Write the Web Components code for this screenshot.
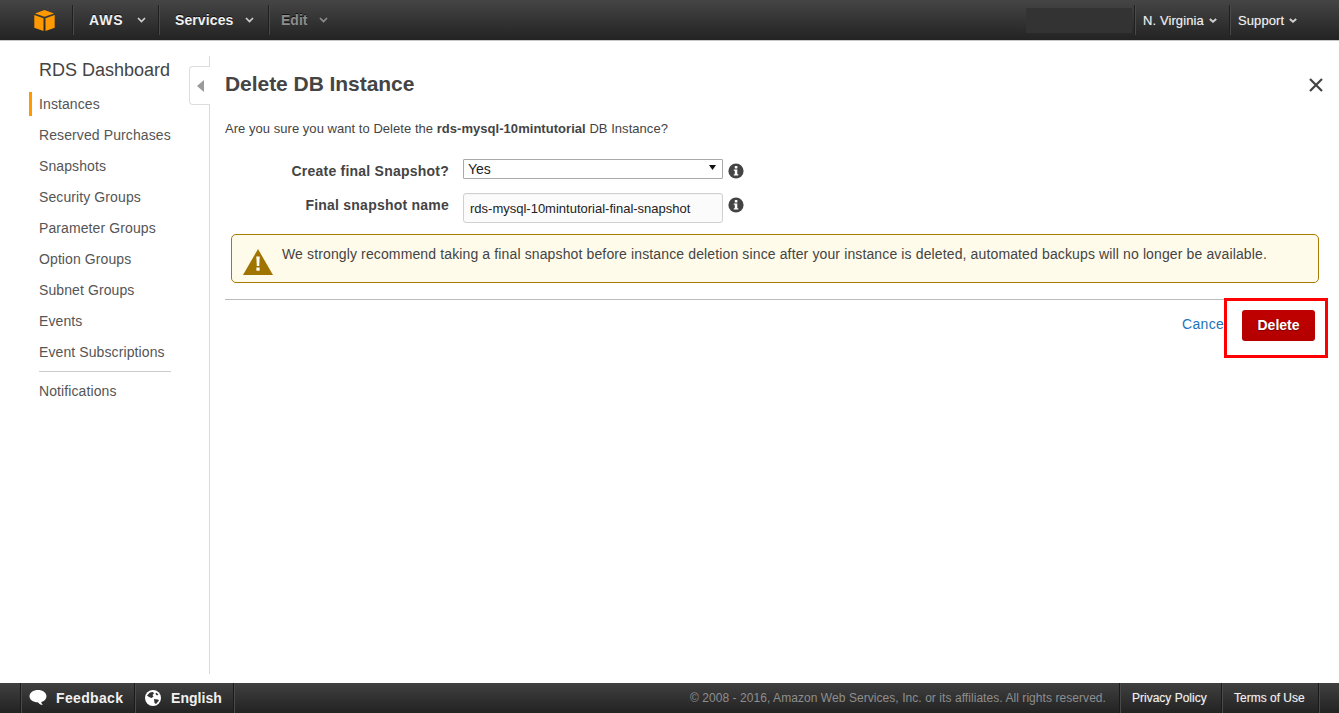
<!DOCTYPE html>
<html><head><meta charset="utf-8"><title>Delete DB Instance</title>
<style>
html,body{margin:0;height:100%;overflow:hidden;background:#fff;font-family:"Liberation Sans",Arial,sans-serif;}
body{display:flex;flex-direction:column;height:713px;}
</style></head><body>
<aws-topbar></aws-topbar>
<div style="flex:1;display:flex;min-height:0;position:relative">
<rds-sidebar></rds-sidebar>
<delete-panel style="flex:1;min-width:0"></delete-panel>
</div>
<aws-footer></aws-footer>
<script>
function def(name, html){
  customElements.define(name, class extends HTMLElement{
    constructor(){super();const r=this.attachShadow({mode:'open'});r.innerHTML=html;}
  });
}
const chev='<svg width="9" height="6" viewBox="0 0 9 6"><path d="M1 1l3.5 3.5L8 1" fill="none" stroke="currentColor" stroke-width="1.7"/></svg>';
const caret='<svg width="8" height="5" viewBox="0 0 8 5"><path d="M.8 .9L4 3.700 7.200 .9" fill="none" stroke="currentColor" stroke-width="2"/></svg>';
def('aws-topbar',`<style>
:host{display:flex;align-items:center;height:40px;flex:none;background:linear-gradient(#454545,#232323);border-bottom:1px solid #c8c8c8;box-sizing:content-box;color:#eee;font-size:14px;font-weight:bold;position:relative}
.logo{width:72px;display:flex;justify-content:flex-end;padding-right:17px;box-sizing:border-box}
.sep{width:1px;height:30px;background:#1f1f1f;border-right:1px solid #4a4a4a;flex:none}
.item{display:flex;align-items:center;height:40px;color:#f0f0f0;text-shadow:0 -1px 0 #111;box-sizing:border-box;white-space:nowrap}
.item svg{color:#cfcfcf}
.aws{width:84px;padding-left:15px;gap:13px;letter-spacing:.9px}
.svc{width:108px;padding-left:15px;gap:12px;letter-spacing:.1px}
.edit{padding-left:11px;gap:12px;color:#8d8d8d}.edit svg{color:#8d8d8d}
.sp{flex:1}
.acct{width:106px;height:25px;background:#333;margin-right:2px}
.sm{font-size:13px;font-weight:normal;gap:5px;padding-left:7px;letter-spacing:.1px;text-shadow:0 0 1px rgba(255,255,255,.35)}
</style>
<div class="logo"><svg width="21" height="21" viewBox="0 0 21 21"><path d="M10.500 0l9.500 3.400-9.500 3.400L1 3.400z" fill="#f90"/><path d="M.3 5l9.200 3.300V21L.3 17.800z" fill="#f90"/><path d="M20.700 5l-9.200 3.300V21l9.200-3.200z" fill="#f90"/></svg></div>
<span class="sep"></span><div class="item aws">AWS ${chev}</div><span class="sep"></span>
<div class="item svc">Services ${chev}</div><span class="sep"></span>
<div class="item edit">Edit ${chev}</div><span class="sp"></span>
<div class="acct"></div><span class="sep"></span>
<div class="item sm" style="width:93px">N. Virginia ${caret}</div><span class="sep"></span>
<div class="item sm" style="width:108px">Support ${caret}</div>
`);
def('side-link',`<style>
:host{display:block;height:31px;line-height:27px;padding-left:10px;font-size:14px;letter-spacing:.1px;color:#555;box-sizing:border-box;white-space:nowrap}
:host([active]){position:relative}
:host([active])::before{content:"";position:absolute;left:0;top:1px;width:3px;height:24px;background:#f90}
</style><slot></slot>`);
def('rds-sidebar',`<style>
:host{display:block;width:210px;flex:none;box-sizing:border-box;position:relative;padding:16px 0 0 29px}
.line{position:absolute;right:0;top:15px;bottom:9px;width:1px;background:#d9d9d9}
h2{margin:0 0 7px 10px;font-size:18px;font-weight:normal;color:#444;line-height:27px;white-space:nowrap}
hr{border:0;border-top:1px solid #ccc;margin:1px 0 6px 10px;width:132px}
.tab{position:absolute;left:189px;top:25px;width:21px;height:39px;background:#fff;border:1px solid #ddd;border-right:0;border-radius:4px 0 0 4px;box-sizing:border-box;display:flex;align-items:center;justify-content:center;z-index:1}
</style>
<div class="line"></div>
<div class="tab"><svg width="7" height="12" viewBox="0 0 7 12"><path d="M7 0v12L0 6z" fill="#9a9a9a"/></svg></div>
<h2>RDS Dashboard</h2>
<side-link active>Instances</side-link>
<side-link>Reserved Purchases</side-link>
<side-link>Snapshots</side-link>
<side-link>Security Groups</side-link>
<side-link>Parameter Groups</side-link>
<side-link>Option Groups</side-link>
<side-link>Subnet Groups</side-link>
<side-link>Events</side-link>
<side-link>Event Subscriptions</side-link>
<hr>
<side-link>Notifications</side-link>
`);
const info='<svg width="16" height="16" viewBox="0 0 16 16"><circle cx="8" cy="8" r="7.600" fill="#444"/><rect x="6.800" y="3" width="2.600" height="2.400" rx=".5" fill="#fff"/><path d="M5.800 6.500h3.500v4.800h1v1.300H5.800v-1.300h1V7.800h-1z" fill="#fff"/></svg>';
def('form-row',`<style>
:host{display:flex;align-items:flex-start;color:#444}
label{width:224px;flex:none;text-align:right;font-size:14px;font-weight:bold;letter-spacing:.23px;color:#444;white-space:nowrap;padding-top:4px}
.ctl{width:260px;flex:none;margin-left:14px}
.i{margin-left:5px;display:flex;padding-top:4px}
</style><label part="l"><slot name="label"></slot></label><div class="ctl"><slot></slot></div><div class="i">${info}</div>`);
def('select-box',`<style>
:host{display:flex;align-items:center;justify-content:space-between;height:20px;box-sizing:border-box;border:1px solid #a9a9a9;background:#fff;border-radius:1px;padding:0 6px 0 4px;font-size:14px;color:#222}
svg{margin-bottom:3px}
</style><span><slot></slot></span><svg width="7" height="5" viewBox="0 0 7 5"><path d="M0 0h7L3.500 5z" fill="#111"/></svg>`);
def('text-box',`<style>
:host{display:flex;align-items:center;height:30px;box-sizing:border-box;border:1px solid #d0d0d0;background:#fbfbfb;border-radius:3px;padding:0 0 0 6px;font-size:13px;color:#222;white-space:nowrap;box-shadow:inset 0 1px 1px rgba(0,0,0,.03)}
</style><slot></slot>`);
def('warn-box',`<style>
:host{display:flex;align-items:flex-start;height:49px;box-sizing:border-box;border:1px solid #a87b00;border-radius:5px;background:#fffbea;font-size:14px;letter-spacing:.13px;color:#444;padding:11px 0 0 50px;position:relative;white-space:nowrap}
svg{position:absolute;left:11px;top:14px}
</style><svg width="30" height="26" viewBox="0 0 30 26"><path d="M15 0L30 26H0z" fill="#a07400"/><path d="M13.300 7.500h3.400l-.5 9.500h-2.400z" fill="#fff"/><rect x="13.400" y="18.500" width="3.200" height="3.200" fill="#fff"/></svg><slot></slot>`);
def('delete-panel',`<style>
:host{display:block;position:relative;padding:0 15px;box-sizing:border-box}
.head{display:flex;justify-content:space-between;align-items:flex-start;height:81px;box-sizing:border-box;padding-top:31px}
h1{margin:0;font-size:21px;color:#444;font-weight:bold;line-height:24px;letter-spacing:-.05px;white-space:nowrap}
.close{display:flex;margin-top:6px;margin-right:1px}
p{margin:0;font-size:13px;letter-spacing:.04px;color:#444;line-height:14px;height:37px;white-space:nowrap}
form-row:nth-of-type(2){margin-top:14px}
warn-box{margin:11px 5px 0 6px}
.rule{border-top:1px solid #bbb;margin-top:16px}
.act{display:flex;justify-content:flex-end;align-items:flex-start;padding-top:10px;gap:19px;padding-right:9px}
a{color:#2474b9;font-size:14px;letter-spacing:.35px;width:41px;white-space:nowrap;line-height:28px}
button{all:unset;width:73px;height:31px;box-sizing:border-box;background:linear-gradient(#c00000,#b40000);border-radius:3px;text-align:center;font:bold 14px/29px "Liberation Sans",Arial,sans-serif;color:#fff;text-shadow:0 1px 1px #700}
.mark{position:absolute;left:1014px;top:257px;width:104px;height:60px;box-sizing:border-box;border:3px solid #f00}
</style>
<div class="head"><h1>Delete DB Instance</h1><span class="close"><svg width="14" height="14" viewBox="0 0 14 14"><path d="M1 1l12 12M13 1L1 13" stroke="#444" stroke-width="2.200"/></svg></span></div>
<p>Are you sure you want to Delete the <b>rds-mysql-10mintutorial</b> DB Instance?</p>
<form-row><span slot="label">Create final Snapshot?</span><select-box>Yes</select-box></form-row>
<form-row><span slot="label">Final snapshot name</span><text-box>rds-mysql-10mintutorial-final-snapshot</text-box></form-row>
<warn-box>We strongly recommend taking a final snapshot before instance deletion since after your instance is deleted, automated backups will no longer be available.</warn-box>
<div class="rule"></div>
<div class="act"><a>Cancel</a><button>Delete</button></div>
<div class="mark"></div>
`);
def('aws-footer',`<style>
:host{display:flex;align-items:center;height:30px;flex:none;background:linear-gradient(#404040,#222);color:#f0f0f0;font-size:14px;font-weight:bold;position:relative}
.sep{width:1px;height:30px;background:#1a1a1a;border-right:1px solid #4a4a4a;flex:none}
.it{display:flex;align-items:center;height:30px;box-sizing:border-box;white-space:nowrap}
.sp{flex:1}
.copy{font-size:12px;font-weight:normal;letter-spacing:.06px;color:#8e8e8e;padding-right:13px}
.s{font-size:12px;font-weight:normal;color:#f0f0f0;text-shadow:0 0 1px rgba(255,255,255,.35);padding-left:11px}
</style>
<div style="width:20px"></div><span class="sep"></span>
<div class="it" style="width:112px;padding-left:7px;gap:9px;letter-spacing:.35px"><svg width="18" height="16" viewBox="0 0 19 17"><path d="M9.500 0c5 0 9 2.900 9 6.600 0 3-2.400 5.300-5.600 6.200.3 1.400.9 2.400 1.700 3.200-2.200-.2-4-1.400-5.300-3C4.100 13 .5 10.200.5 6.600.5 2.900 4.500 0 9.500 0z" fill="#fff"/></svg>Feedback</div><span class="sep"></span>
<div class="it" style="width:97px;padding-left:9px;gap:10px;letter-spacing:.05px"><svg width="16" height="16" viewBox="0 0 16 16"><circle cx="8" cy="8" r="8" fill="#fff"/><path d="M2 5.500l3-3 3-.5 1 1.500-1.500 1.500 1 1.500L6.500 8 4 7zM9 9l4 .5 1 1-3 3.500-1.500-1zM11 2.500l2.500 2-1.500 1-1.500-1.500z" fill="#333"/></svg>English</div><span class="sep"></span>
<span class="sp"></span>
<div class="it copy">© 2008 - 2016, Amazon Web Services, Inc. or its affiliates. All rights reserved.</div><span class="sep"></span>
<div class="it s" style="width:100px">Privacy Policy</div><span class="sep"></span>
<div class="it s" style="width:95px">Terms of Use</div><span class="sep"></span><div style="width:19px"></div>
`);
</script>
</body></html>
